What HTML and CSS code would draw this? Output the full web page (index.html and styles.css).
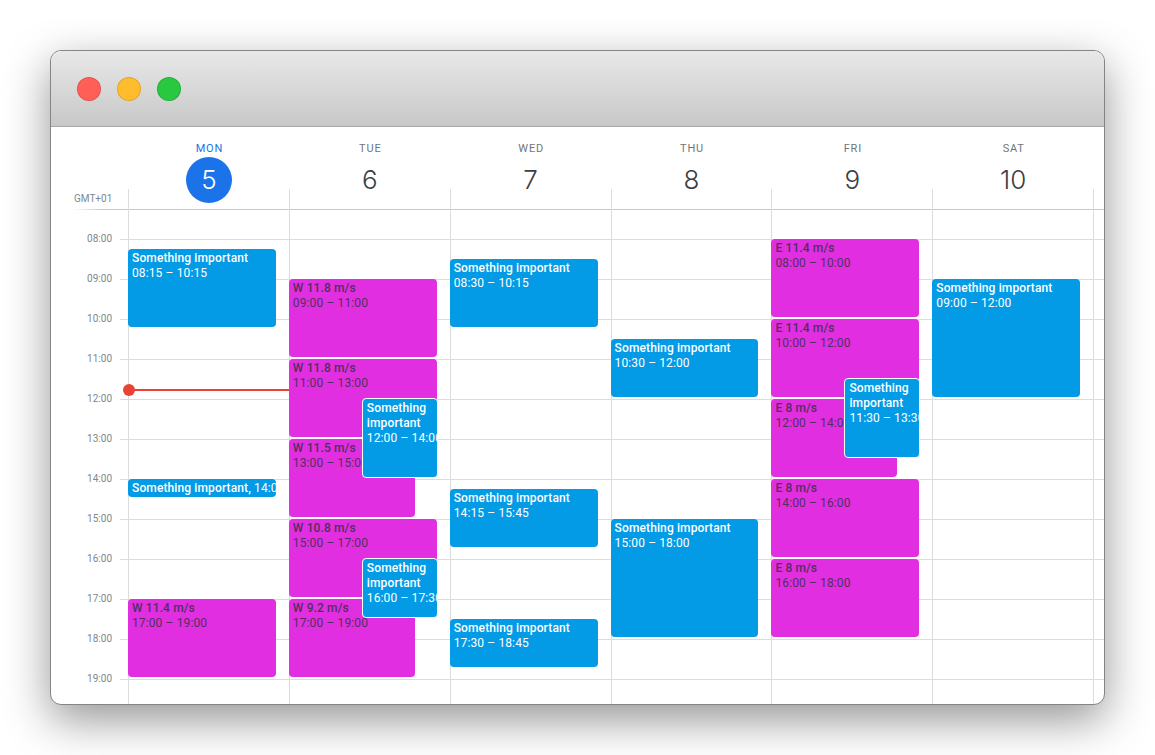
FILE: index.html
```html
<!DOCTYPE html>
<html lang="en">
<head>
  <meta charset="UTF-8" />
  <title>Calendar</title>
  <link rel="stylesheet" href="styles.css">
</head>
<body>
  <div class="window">
    <div class="titlebar">
      <span class="light red"></span>
      <span class="light yellow"></span>
      <span class="light green"></span>
    </div>

    <div class="day-heads">
      <div class="gutter"></div>
      <div class="day-head today"><span class="dow">MON</span><span class="num">5</span></div>
      <div class="day-head"><span class="dow">TUE</span><span class="num">6</span></div>
      <div class="day-head"><span class="dow">WED</span><span class="num">7</span></div>
      <div class="day-head"><span class="dow">THU</span><span class="num">8</span></div>
      <div class="day-head"><span class="dow">FRI</span><span class="num">9</span></div>
      <div class="day-head"><span class="dow">SAT</span><span class="num">10</span></div>
    </div>

    <div class="all-day">
      <div class="gutter tz">GMT+01</div>
      <div class="all-day-cell"></div>
      <div class="all-day-cell"></div>
      <div class="all-day-cell"></div>
      <div class="all-day-cell"></div>
      <div class="all-day-cell"></div>
      <div class="all-day-cell"></div>
      <div class="all-day-cell last"></div>
    </div>

    <div class="grid">
      <div class="hour"><span class="time">08:00</span><span class="line"></span></div>
      <div class="hour"><span class="time">09:00</span><span class="line"></span></div>
      <div class="hour"><span class="time">10:00</span><span class="line"></span></div>
      <div class="hour"><span class="time">11:00</span><span class="line"></span></div>
      <div class="hour"><span class="time">12:00</span><span class="line"></span></div>
      <div class="hour"><span class="time">13:00</span><span class="line"></span></div>
      <div class="hour"><span class="time">14:00</span><span class="line"></span></div>
      <div class="hour"><span class="time">15:00</span><span class="line"></span></div>
      <div class="hour"><span class="time">16:00</span><span class="line"></span></div>
      <div class="hour"><span class="time">17:00</span><span class="line"></span></div>
      <div class="hour"><span class="time">18:00</span><span class="line"></span></div>
      <div class="hour"><span class="time">19:00</span><span class="line"></span></div>

      <div class="columns">
        <div class="col">
          <div class="now"></div>
          <div class="ev blue" style="top:39px;height:78px"><b>Something important</b><span>08:15 – 10:15</span></div>
          <div class="ev blue one-line" style="top:269px;height:18px"><b>Something important,</b> <span>14:00</span></div>
          <div class="ev wind" style="top:389px;height:78px"><b>W 11.4 m/s</b><span>17:00 – 19:00</span></div>
        </div>
        <div class="col">
          <div class="ev wind" style="top:69px;height:78px"><b>W 11.8 m/s</b><span>09:00 – 11:00</span></div>
          <div class="ev wind" style="top:149px;height:78px"><b>W 11.8 m/s</b><span>11:00 – 13:00</span></div>
          <div class="ev wind short" style="top:229px;height:78px"><b>W 11.5 m/s</b><span>13:00 – 15:00</span></div>
          <div class="ev wind" style="top:309px;height:78px"><b>W 10.8 m/s</b><span>15:00 – 17:00</span></div>
          <div class="ev wind short" style="top:389px;height:78px"><b>W 9.2 m/s</b><span>17:00 – 19:00</span></div>
          <div class="ev blue over" style="top:188px;height:80px"><b>Something important</b><span>12:00 – 14:00</span></div>
          <div class="ev blue over" style="top:348px;height:60px"><b>Something important</b><span>16:00 – 17:30</span></div>
        </div>
        <div class="col">
          <div class="ev blue" style="top:49px;height:68px"><b>Something important</b><span>08:30 – 10:15</span></div>
          <div class="ev blue" style="top:279px;height:58px"><b>Something important</b><span>14:15 – 15:45</span></div>
          <div class="ev blue" style="top:409px;height:48px"><b>Something important</b><span>17:30 – 18:45</span></div>
        </div>
        <div class="col">
          <div class="ev blue" style="top:129px;height:58px"><b>Something important</b><span>10:30 – 12:00</span></div>
          <div class="ev blue" style="top:309px;height:118px"><b>Something important</b><span>15:00 – 18:00</span></div>
        </div>
        <div class="col">
          <div class="ev wind" style="top:29px;height:78px"><b>E 11.4 m/s</b><span>08:00 – 10:00</span></div>
          <div class="ev wind" style="top:109px;height:78px"><b>E 11.4 m/s</b><span>10:00 – 12:00</span></div>
          <div class="ev wind short" style="top:189px;height:78px"><b>E 8 m/s</b><span>12:00 – 14:00</span></div>
          <div class="ev wind" style="top:269px;height:78px"><b>E 8 m/s</b><span>14:00 – 16:00</span></div>
          <div class="ev wind" style="top:349px;height:78px"><b>E 8 m/s</b><span>16:00 – 18:00</span></div>
          <div class="ev blue over" style="top:168px;height:80px"><b>Something important</b><span>11:30 – 13:30</span></div>
        </div>
        <div class="col">
          <div class="ev blue" style="top:69px;height:118px"><b>Something important</b><span>09:00 – 12:00</span></div>
        </div>
        <div class="col last"></div>
      </div>
    </div>
  </div>
</body>
</html>
```

FILE: styles.css
```css
* {
  box-sizing: border-box;
}

html, body {
  height: 755px;
  overflow: hidden;
}

body {
  margin: 0;
  padding: 50px;
  background: #fff;
  font-family: Roboto, "Liberation Sans", sans-serif;
}

.window {
  position: relative;
  width: 1055px;
  height: 655px;
  background: #fff;
  border: 1px solid #858585;
  border-radius: 11px;
  overflow: hidden;
  box-shadow: 0 15px 45px rgba(0, 0, 0, 0.42);
}

.titlebar {
  display: flex;
  gap: 16px;
  height: 76px;
  padding: 26px 0 0 26px;
  background: linear-gradient(#e8e8e8, #c8c8c8);
  border-bottom: 1px solid #a8a8a8;
}

.light {
  width: 24px;
  height: 24px;
  border-radius: 50%;
  border: 1px solid rgba(0, 0, 0, 0.12);
}

.red { background: #ff5f57; }
.yellow { background: #ffbd2e; }
.green { background: #28c840; }

.gutter {
  flex: 0 0 77px;
}

.day-heads {
  display: flex;
  height: 62px;
}

.day-head {
  flex: 0 0 160.87px;
  display: flex;
  flex-direction: column;
  align-items: center;
  padding: 15px 0 0 2px;
  position: relative;
  z-index: 2;
}

.dow {
  font-size: 11px;
  line-height: 14px;
  letter-spacing: 0.8px;
  color: #70757a;
}

.num {
  width: 46px;
  height: 46px;
  margin: 1px 0 0 -1px;
  border-radius: 50%;
  font-family: Inter, Lato, sans-serif;
  font-size: 26px;
  font-weight: 300;
  line-height: 46px;
  text-align: center;
  color: #3c4043;
}

.today .dow {
  color: #1a73e8;
}

.today .num {
  background: #1a73e8;
  color: #fff;
}

.all-day {
  display: flex;
  height: 21px;
  background: linear-gradient(to right, transparent 22px, #c8c8c8 50px) left bottom / 100% 1px no-repeat;
}

.tz {
  padding: 3px 0 0 23px;
  font-size: 10px;
  line-height: 14px;
  color: #80868b;
}

.all-day-cell {
  flex: 0 0 160.87px;
  border-left: 1px solid #dadce0;
}

.all-day-cell.last {
  flex: 1;
}

.grid {
  position: relative;
  padding-top: 29px;
  height: 495px;
}

.hour {
  display: flex;
  height: 40px;
}

.time {
  flex: 0 0 61px;
  height: 14px;
  margin-top: -7px;
  font-size: 10px;
  line-height: 14px;
  text-align: right;
  color: #80868b;
}

.line {
  flex: 1;
  margin-left: 8px;
  border-top: 1px solid #dadce0;
}

.columns {
  position: absolute;
  top: 0;
  bottom: 0;
  left: 77px;
  right: 0;
  display: flex;
}

.col {
  flex: 0 0 160.87px;
  position: relative;
  background: linear-gradient(#dadce0, #dadce0) left top / 1px 100% no-repeat;
}

.col.last {
  flex: 1;
}

.now {
  position: absolute;
  top: 179px;
  left: 0;
  width: 161px;
  height: 2px;
  background: #ea4335;
}

.now::before {
  content: "";
  position: absolute;
  top: -5px;
  left: -5px;
  width: 12px;
  height: 12px;
  border-radius: 50%;
  background: #ea4335;
}

.ev {
  position: absolute;
  left: 0;
  width: 147.8px;
  padding: 2px 4px 0;
  border-radius: 4px;
  overflow: hidden;
  font-size: 12px;
  line-height: 15px;
  letter-spacing: 0.12px;
}

.ev b {
  display: block;
  font-weight: 500;
}

.ev span {
  display: block;
  white-space: nowrap;
}

.blue {
  background: #039be5;
  color: #fff;
}

.wind {
  background: #e02ee0;
  color: #52305e;
}

.short {
  width: 126px;
}

.over {
  left: 73px;
  width: 75.8px;
  padding: 2px 4px 0;
  border: 1px solid #fff;
  z-index: 1;
}

.one-line {
  white-space: nowrap;
}

.one-line b,
.one-line span {
  display: inline;
}
```
